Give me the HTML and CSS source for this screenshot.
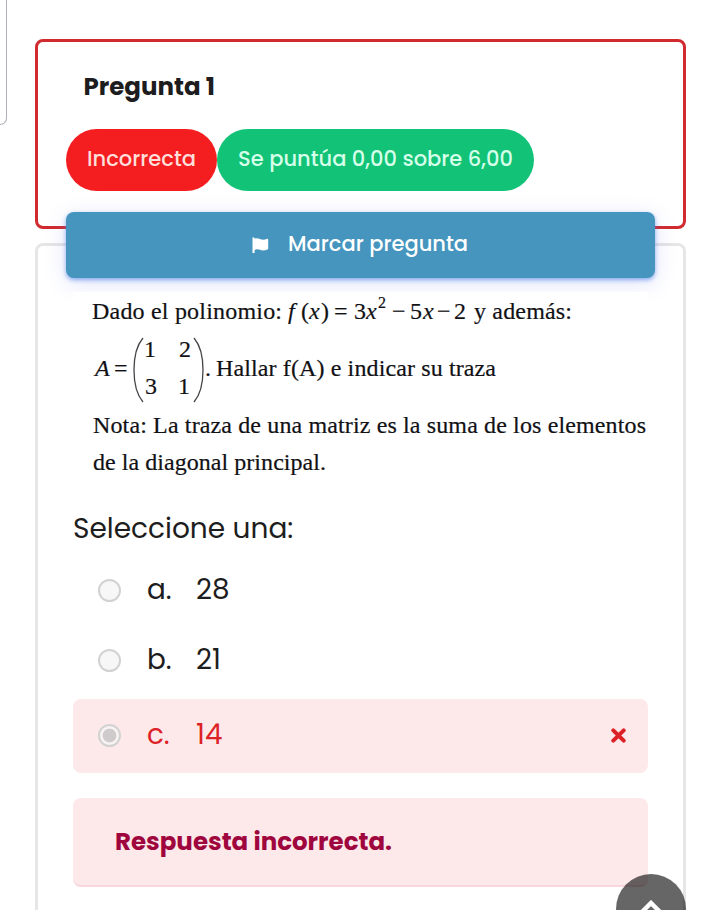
FILE: index.html
```html
<!DOCTYPE html>
<html lang="es">
<head>
<meta charset="utf-8">
<title>Pregunta 1</title>
<link rel="stylesheet" href="styles.css">
</head>
<body>
<div class="page">
  <aside class="drawer-edge"></aside>
  <main class="question">
    <section class="info">
      <h3 class="title">Pregunta 1</h3>
      <div class="badges">
        <span class="badge state">Incorrecta</span>
        <span class="badge grade">Se puntúa 0,00 sobre 6,00</span>
      </div>
      <button class="flag-button" type="button">
        <svg class="flag" width="17" height="17" viewBox="0 0 17 17"><path d="M1.2 .3Q2.4 .3 2.4 1.6Q5 .8 8 2Q11 3.400 15.400 1.700Q16.200 1.500 16.200 2.400V11.500Q16.200 12.200 15.500 12.500Q11 14.200 8 12.800Q5 11.800 2.600 13V16H.5V1.300Q.3 .300 1.200 .300Z" fill="#fff"/></svg>
        <span>Marcar pregunta</span>
      </button>
    </section>
    <section class="content">
      <svg class="statement" width="575" height="190" viewBox="73 292 575 190">
        <rect x="73" y="292" width="575" height="190" fill="#fff"/>
        <text x="92" y="319" textLength="190">Dado el polinomio:</text>
        <text class="it" x="288" y="319">f</text>
        <text x="301" y="319">(</text>
        <text class="it" x="309" y="319">x</text>
        <text x="321" y="319">)</text>
        <text x="334" y="319">=</text>
        <text x="354" y="319">3</text>
        <text class="it" x="366" y="319">x</text>
        <text class="sup" x="378" y="308">2</text>
        <text x="392" y="319">−</text>
        <text x="410" y="319">5</text>
        <text class="it" x="423" y="319">x</text>
        <text x="437" y="319">−</text>
        <text x="454" y="319">2</text>
        <text x="474" y="319" textLength="98">y además:</text>
        <text class="it" x="95" y="376">A</text>
        <text x="114" y="376">=</text>
        <path class="paren" d="M143 338C131 352 131 388 143 402M194 338C206 352 206 388 194 402"/>
        <text x="144" y="357">1</text>
        <text x="179" y="357">2</text>
        <text x="145" y="394">3</text>
        <text x="178" y="394">1</text>
        <text x="205" y="376">.</text>
        <text x="216" y="376" textLength="280">Hallar f(A) e indicar su traza</text>
        <text x="93" y="433" textLength="553">Nota: La traza de una matriz es la suma de los elementos</text>
        <text x="93" y="470" textLength="233">de la diagonal principal.</text>
      </svg>
      <div class="prompt">Seleccione una:</div>
      <div class="answers">
        <label class="answer"><span class="radio"></span><span class="letter">a.</span><span class="value">28</span></label>
        <label class="answer"><span class="radio"></span><span class="letter">b.</span><span class="value">21</span></label>
        <label class="answer wrong"><span class="radio checked"></span><span class="letter">c.</span><span class="value">14</span>
          <svg class="cross" width="15" height="15" viewBox="0 0 15 15"><path d="M2.300 2.300L12.700 12.700M12.700 2.300L2.300 12.700" stroke="#dc2226" stroke-width="4" stroke-linecap="round"/></svg>
        </label>
      </div>
      <div class="feedback">Respuesta incorrecta.</div>
    </section>
  </main>
</div>
<a class="to-top"><svg width="24" height="16" viewBox="0 0 24 16"><path d="M2 13L12 3L22 13" fill="none" stroke="#fff" stroke-width="4.500"/></svg></a>
</body>
</html>
```

FILE: styles.css
```css
* { box-sizing: border-box; }
body {
  margin: 0;
  height: 910px;
  overflow: hidden;
  background: #fff;
  color: #1d1d20;
  font-family: Poppins, Inter, "Open Sans", sans-serif;
}
.page { display: flex; align-items: flex-start; height: 910px; }
.drawer-edge {
  width: 7px;
  height: 125px;
  border: solid #aeb1b6;
  border-width: 0 1px 1px 0;
  border-bottom-right-radius: 9px;
}
.question { width: 651px; margin: 39px 0 0 28px; }
.info {
  height: 190px;
  padding: 27px 28px 0;
  border: 3px solid #d12b30;
  border-radius: 8px;
}
.title {
  margin: 0 0 24px;
  padding-left: 17.5px;
  font-size: 24.5px;
  line-height: 36px;
  font-weight: 700;
}
.badges { display: flex; white-space: nowrap; }
.badge {
  display: flex;
  justify-content: center;
  height: 62px;
  border-radius: 31px;
  font-size: 21px;
  line-height: 60px;
  font-weight: 500;
}
.state { width: 151px; background: #f41e21; color: #ffdfd9; }
.grade { width: 317px; background: #11c277; color: #d5ffe9; }
.flag-button {
  position: relative;
  z-index: 1;
  display: flex;
  justify-content: center;
  align-items: center;
  gap: 19px;
  width: 589px;
  height: 66px;
  margin-top: 21px;
  padding: 0 1px 2px 0;
  border: 0;
  border-radius: 8px;
  background: #4595be;
  box-shadow: 0 2px 4px rgba(70, 125, 230, .6), 0 5px 22px rgba(95, 110, 230, .2);
  color: #fff;
  font: 500 21px/64px Poppins, Inter, sans-serif;
  white-space: nowrap;
}
.flag { margin-top: 2px; }
.content {
  height: 700px;
  margin-top: 14px;
  padding: 46px 35px 0;
  border: 3px solid #e6e6e6;
  border-radius: 8px;
}
.statement {
  position: relative;
  z-index: 2;
  display: block;
  font-family: "Liberation Serif", serif;
  font-size: 24px;
  fill: #111114;
  stroke: #111114;
  stroke-width: .2px;
}
.statement rect { stroke: none; }
.it { font-style: italic; }
.sup { font-size: 16px; }
.paren { fill: none; stroke: #45454a; stroke-width: 1.3px; }
.prompt {
  margin-top: 27px;
  font-size: 28px;
  line-height: 40px;
  font-weight: 400;
}
.answers { margin-top: 7px; }
.answer {
  display: flex;
  align-items: center;
  height: 74px;
  padding: 0 22px 1px 25px;
  border-radius: 8px;
  font-size: 27.8px;
  line-height: 70px;
}
.answer:not(.wrong) { height: 70px; }
.answer.wrong { margin-top: 3px; background: #fde9ea; color: #dc2226; }
.radio {
  width: 23px;
  height: 23px;
  margin-right: 26px;
  border: 2px solid #d2d2d3;
  border-radius: 50%;
  background: #f7f7f7;
}
.checked { background: radial-gradient(circle, #cfcbcc 0 6.500px, #f9f2f3 7.200px); }
.letter { width: 49px; margin-top: -2px; }
.value { margin-top: -2px; }
.cross { margin-left: auto; }
.feedback {
  height: 89px;
  margin-top: 25px;
  padding-left: 42px;
  border-bottom: 2px solid #f7d6de;
  border-radius: 8px;
  background: #fde9ea;
  color: #a0063e;
  font-size: 24.5px;
  line-height: 87px;
  font-weight: 700;
  white-space: nowrap;
}
.to-top {
  position: absolute;
  left: 616px;
  top: 874px;
  display: flex;
  justify-content: center;
  width: 70px;
  height: 70px;
  padding-top: 26px;
  border-radius: 50%;
  background: rgba(0, 0, 0, .6);
}
```
